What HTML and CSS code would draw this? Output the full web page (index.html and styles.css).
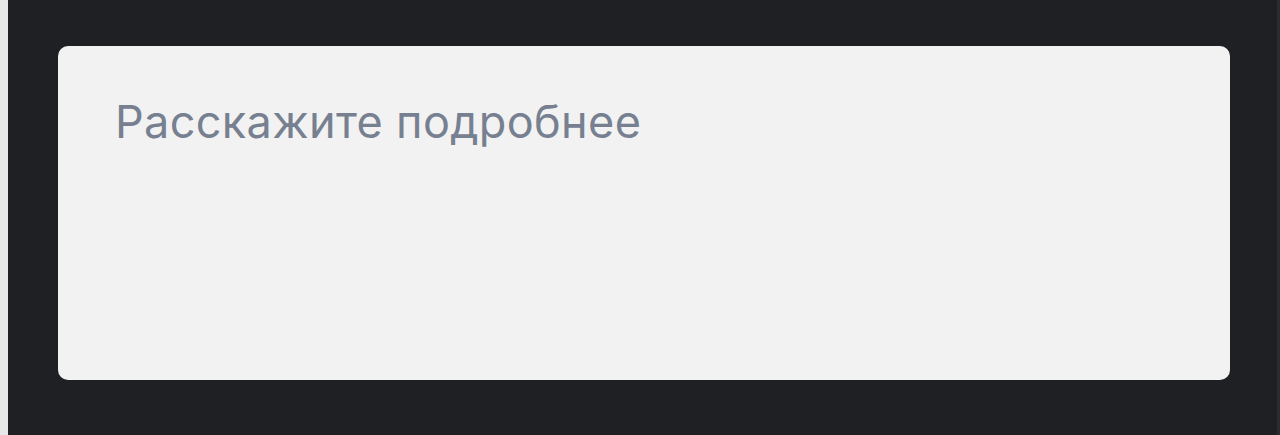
FILE: index.html
```html
<!DOCTYPE html>
<html lang="ru">
<head>
<meta charset="utf-8">
<link rel="stylesheet" href="styles.css">
</head>
<body>
<div class="frame">
  <div class="panel">
    <div class="field">
      <div class="placeholder">Расскажите подробнее</div>
    </div>
  </div>
  <div class="edge"></div>
</div>
</body>
</html>
```
FILE: styles.css
```css
html, body {
  margin: 0;
  padding: 0;
}
body {
  background: #e7e7e8;
  width: 1280px;
  height: 435px;
  overflow: hidden;
}
.frame {
  display: flex;
  margin-left: 8px;
  height: 435px;
}
.panel {
  flex: 1;
  background: #1f2023;
  padding: 46px 47px 0 50px;
}
.edge {
  width: 3px;
  background: #2b2c30;
}
.field {
  background: #f2f2f2;
  border-radius: 10px;
  height: 334px;
  box-sizing: border-box;
  padding: 46px 57px 0;
}
.placeholder {
  font-family: "Inter", "Open Sans", sans-serif;
  font-size: 45px;
  line-height: 60px;
  font-weight: 400;
  color: #778090;
  letter-spacing: 0.35px;
}
```
